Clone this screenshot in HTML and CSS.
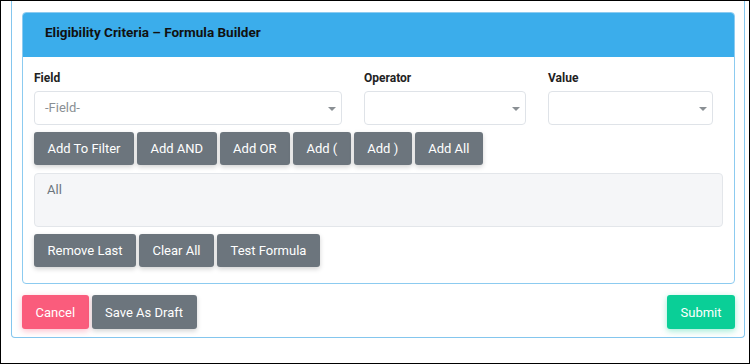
FILE: index.html
```html
<!DOCTYPE html>
<html lang="en">
<head>
    <meta charset="UTF-8">
    <meta name="viewport" content="width=device-width, initial-scale=1.0">
    <title>Eligibility Criteria</title>
    <link rel="stylesheet" href="styles.css">
</head>
<body>

    <div class="frame">
        <div class="panel">

            <div class="card">
                <div class="card-header">Eligibility Criteria &ndash; Formula Builder</div>

                <div class="card-body">
                    <!-- Field / Operator / Value -->
                    <div class="field-row">
                        <div class="field-col">
                            <label class="field-label">Field</label>
                            <div class="select placeholder">-Field-</div>
                        </div>
                        <div class="field-col">
                            <label class="field-label">Operator</label>
                            <div class="select"></div>
                        </div>
                        <div class="field-col">
                            <label class="field-label">Value</label>
                            <div class="select"></div>
                        </div>
                    </div>

                    <div class="btn-row">
                        <button class="btn btn-secondary">Add To Filter</button>
                        <button class="btn btn-secondary">Add AND</button>
                        <button class="btn btn-secondary">Add OR</button>
                        <button class="btn btn-secondary">Add (</button>
                        <button class="btn btn-secondary">Add )</button>
                        <button class="btn btn-secondary">Add All</button>
                    </div>

                    <!-- Formula preview -->
                    <div class="formula-box">All</div>

                    <div class="btn-row">
                        <button class="btn btn-secondary">Remove Last</button>
                        <button class="btn btn-secondary">Clear All</button>
                        <button class="btn btn-secondary">Test Formula</button>
                    </div>
                </div>
            </div>

            <div class="footer">
                <div class="btn-row">
                    <button class="btn btn-danger">Cancel</button>
                    <button class="btn btn-secondary">Save As Draft</button>
                </div>
                <button class="btn btn-success">Submit</button>
            </div>

        </div>
    </div>

</body>
</html>
```

FILE: styles.css
```css
* {
    margin: 0;
    padding: 0;
    box-sizing: border-box;
    font-family: Roboto, "Liberation Sans", sans-serif;
}

body {
    background: #fff;
    color: #212529;
}

.frame {
    width: 750px;
    height: 364px;
    border: 1px solid #000;
    padding: 0 4px 0 10px;
}

.panel {
    border: 1px solid #84c6ee;
    border-top: none;
    border-radius: 0 0 4px 4px;
    padding: 11px 8px 8px 10px;
}

.card {
    border: 1px solid #8ccbf0;
    border-radius: 4px;
    width: 713px;
    overflow: hidden;
}

.card-header {
    background: #3badeb;
    height: 44px;
    padding: 11px 22px 0;
    font-size: 13.5px;
    font-weight: bold;
    color: #111;
}

.card-body {
    padding: 14px 11px 16px;
}

.field-row {
    display: grid;
    grid-template-columns: 308px 162px 165px;
    column-gap: 22px;
}

.field-label {
    display: block;
    font-size: 12px;
    font-weight: bold;
    color: #222;
    height: 20px;
}

.select {
    position: relative;
    height: 34px;
    border: 1px solid #dfe3e8;
    border-radius: 4px;
    padding: 0 10px;
    font-size: 13px;
    line-height: 32px;
    color: #333;
}

.select.placeholder {
    color: #8a8f94;
}

/* dropdown caret */
.select::after {
    content: "";
    position: absolute;
    right: 5px;
    top: 15px;
    border-left: 4px solid transparent;
    border-right: 4px solid transparent;
    border-top: 4px solid #8a8f94;
}

.btn-row {
    display: flex;
    gap: 3px;
}

.field-row + .btn-row {
    margin-top: 7px;
}

.btn {
    height: 33px;
    padding: 0 13.5px;
    border: none;
    border-radius: 3px;
    font-size: 13px;
    color: #fff;
    cursor: pointer;
    box-shadow: 0 2px 5px rgba(0, 0, 0, 0.18);
}

.btn-secondary {
    background: #6c757d;
}

.btn-danger {
    background: #fa5c7c;
    box-shadow: 0 2px 6px rgba(250, 92, 124, 0.4);
}

.btn-success {
    background: #0acf97;
    box-shadow: 0 2px 6px rgba(10, 207, 151, 0.4);
}

.formula-box {
    margin: 8px 0 7px;
    height: 54px;
    background: #f5f6f8;
    border: 1px solid #e3e6ea;
    border-radius: 4px;
    padding: 8px 12px;
    font-size: 13px;
    color: #6c757d;
}

.footer {
    display: flex;
    justify-content: space-between;
    width: 713px;
    margin-top: 11px;
}

.footer .btn {
    height: 34px;
}
```
